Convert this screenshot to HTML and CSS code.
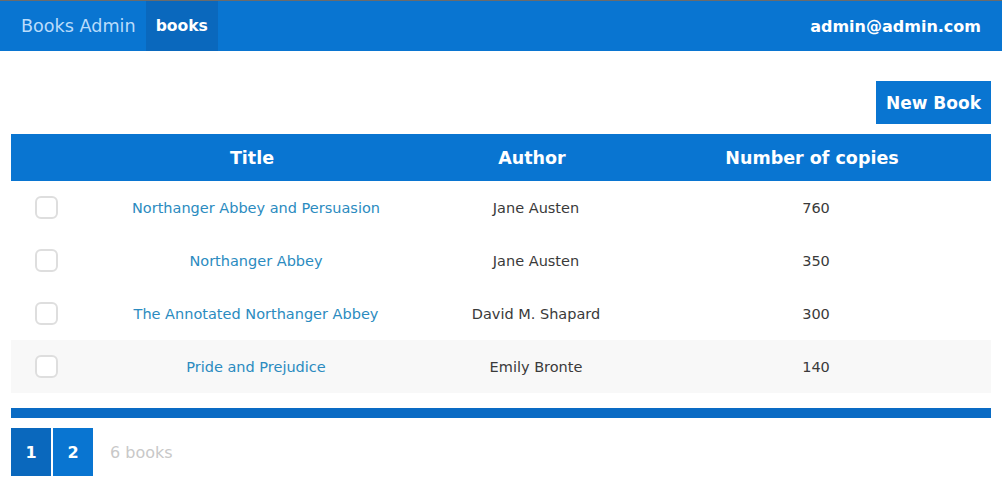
FILE: index.html
```html
<!DOCTYPE html>
<html>
<head>
<meta charset="utf-8">
<link rel="stylesheet" href="styles.css">
</head>
<body>
<div class="topline"></div>
<nav class="navbar">
  <div class="nav-left">
    <a class="brand">Books Admin</a>
    <a class="nav-item active">books</a>
  </div>
  <div class="nav-right">admin@admin.com</div>
</nav>
<main class="content">
  <div class="toolbar">
    <button class="btn-new">New Book</button>
  </div>
  <div class="table">
    <div class="row head">
      <div class="cell"></div>
      <div class="cell th">Title</div>
      <div class="cell th">Author</div>
      <div class="cell th">Number of copies</div>
      <div class="cell"></div>
    </div>
    <div class="row">
      <div class="cell"><span class="check"></span></div>
      <div class="cell"><a class="link">Northanger Abbey and Persuasion</a></div>
      <div class="cell">Jane Austen</div>
      <div class="cell">760</div>
      <div class="cell"></div>
    </div>
    <div class="row">
      <div class="cell"><span class="check"></span></div>
      <div class="cell"><a class="link">Northanger Abbey</a></div>
      <div class="cell">Jane Austen</div>
      <div class="cell">350</div>
      <div class="cell"></div>
    </div>
    <div class="row">
      <div class="cell"><span class="check"></span></div>
      <div class="cell"><a class="link">The Annotated Northanger Abbey</a></div>
      <div class="cell">David M. Shapard</div>
      <div class="cell">300</div>
      <div class="cell"></div>
    </div>
    <div class="row hover">
      <div class="cell"><span class="check"></span></div>
      <div class="cell"><a class="link">Pride and Prejudice</a></div>
      <div class="cell">Emily Bronte</div>
      <div class="cell">140</div>
      <div class="cell"></div>
    </div>
  </div>
  <div class="bar"></div>
  <div class="pager">
    <a class="page current">1</a>
    <a class="page">2</a>
    <span class="count">6 books</span>
  </div>
</main>
</body>
</html>
```
FILE: styles.css
```css
* { box-sizing: border-box; }
html, body { margin: 0; padding: 0; background: #fff; }
body { font-family: "DejaVu Sans", "Liberation Sans", sans-serif; color: #3a3a3a; }
.topline { height: 1px; background: #6b6b6b; }
.navbar {
  height: 50px;
  background: #0975d1;
  display: flex;
  justify-content: space-between;
  align-items: stretch;
}
.nav-left { display: flex; align-items: stretch; }
.brand {
  display: flex; align-items: center;
  padding: 0 10px 0 21px;
  color: #b9dcfb;
  font-size: 17.6px;
}
.nav-item {
  display: flex; align-items: center;
  padding: 0 10px;
  color: #fff;
  font-size: 15.6px;
  font-weight: bold;
}
.nav-item.active { background: #0a68bd; }
.nav-right {
  display: flex; align-items: center;
  padding-right: 21px;
  color: #fff;
  font-size: 16px;
  font-weight: bold;
}
.content { padding: 30px 11px 0 11px; }
.toolbar { display: flex; justify-content: flex-end; margin-bottom: 10px; }
.btn-new {
  height: 43px;
  width: 115px;
  border: 0;
  background: #0975d1;
  color: #fff;
  font-family: inherit;
  font-size: 17px;
  font-weight: bold;
  padding: 0;
}
.table { display: flex; flex-direction: column; }
.row {
  display: grid;
  grid-template-columns: 105px 280px 280px 280px 35px;
  height: 53px;
  align-items: center;
  font-size: 14.5px;
}
.row.head { height: 47px; background: #0975d1; color: #fff; }
.row.hover { background: #f8f8f8; }
.cell { text-align: center; }
.cell:first-child { text-align: left; padding-left: 24px; display: flex; }
.th { font-weight: bold; font-size: 17.5px; padding-right: 8px; }
.link { color: #2b8bc0; }
.check {
  width: 23px; height: 23px;
  border: 2px solid #dedede;
  border-radius: 6px;
  background: #fff;
  display: block;
}
.bar { height: 10px; background: #0a6bc4; margin-top: 15px; }
.pager { display: flex; align-items: center; margin-top: 10px; gap: 2px; }
.page {
  width: 40px; height: 48px;
  display: flex; align-items: center; justify-content: center;
  background: #0975d1; color: #fff; font-weight: bold; font-size: 16px;
}
.page.current { background: #0a68bd; }
.count { margin-left: 15px; color: #c8c8c8; font-size: 16px; }
```
